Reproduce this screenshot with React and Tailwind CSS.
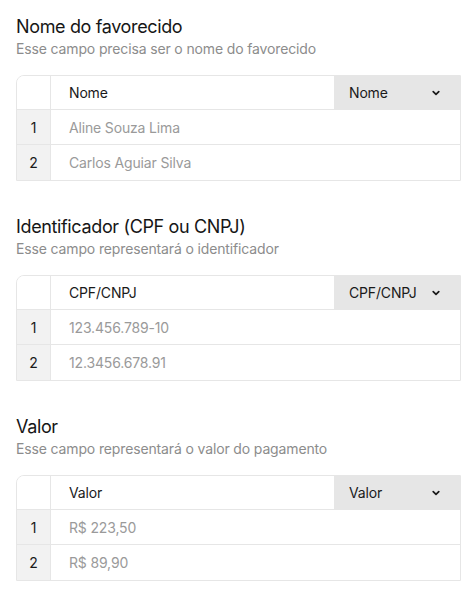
import React from "react";

const sections = [
  {
    title: "Nome do favorecido",
    subtitle: "Esse campo precisa ser o nome do favorecido",
    column: "Nome",
    rows: ["Aline Souza Lima", "Carlos Aguiar Silva"],
  },
  {
    title: "Identificador (CPF ou CNPJ)",
    subtitle: "Esse campo representará o identificador",
    column: "CPF/CNPJ",
    rows: ["123.456.789-10", "12.3456.678.91"],
  },
  {
    title: "Valor",
    subtitle: "Esse campo representará o valor do pagamento",
    column: "Valor",
    rows: ["R$ 223,50", "R$ 89,90"],
  },
];

function Chevron() {
  return (
    <svg width="10" height="10" viewBox="0 0 10 10" fill="none">
      <path d="M2.2 3.6 L5 6.4 L7.8 3.6" stroke="#1a1a1a" strokeWidth="1.7" strokeLinecap="round" strokeLinejoin="round" />
    </svg>
  );
}

function Section({ s }) {
  return (
    <div className="flex flex-col">
      <h2 className="text-[18px] leading-[24px] text-[#161616] font-normal tracking-[-0.02em]">{s.title}</h2>
      <p className="text-[14px] leading-[20px] text-[#8c8c8c] tracking-[-0.01em]">{s.subtitle}</p>
      <div className="mt-4 w-[445px] border border-[#e6e6e6] rounded-tl-[8px] overflow-hidden tracking-[-0.01em]">
        <div className="flex h-[34px] border-b border-[#e6e6e6]">
          <div className="w-[34px] border-r border-[#e6e6e6] bg-white" />
          <div className="flex-1 flex items-center pl-[18px] text-[14px] text-[#1a1a1a]">{s.column}</div>
          <div className="w-[126px] bg-[#e6e6e6] flex items-center justify-between pl-[15px] pr-[19px] text-[14px] text-[#1a1a1a]">
            <span>{s.column}</span>
            <Chevron />
          </div>
        </div>
        {s.rows.map((r, i) => (
          <div key={i} className={`flex h-[35px] ${i === 0 ? "border-b border-[#e6e6e6]" : ""}`}>
            <div className="w-[34px] border-r border-[#e6e6e6] bg-[#f2f2f2] flex items-center justify-center text-[14px] text-[#1a1a1a]">
              {i + 1}
            </div>
            <div className="flex-1 flex items-center pl-[18px] text-[14px] text-[#9a9a9a]">{r}</div>
          </div>
        ))}
      </div>
    </div>
  );
}

export default function App() {
  return (
    <div
      className="w-[473px] h-[598px] bg-white pl-[16px] pt-[15px] flex flex-col gap-[34px]"
      style={{ fontFamily: "Inter, 'Noto Sans', sans-serif" }}
    >
      {sections.map((s, i) => (
        <Section key={i} s={s} />
      ))}
    </div>
  );
}
